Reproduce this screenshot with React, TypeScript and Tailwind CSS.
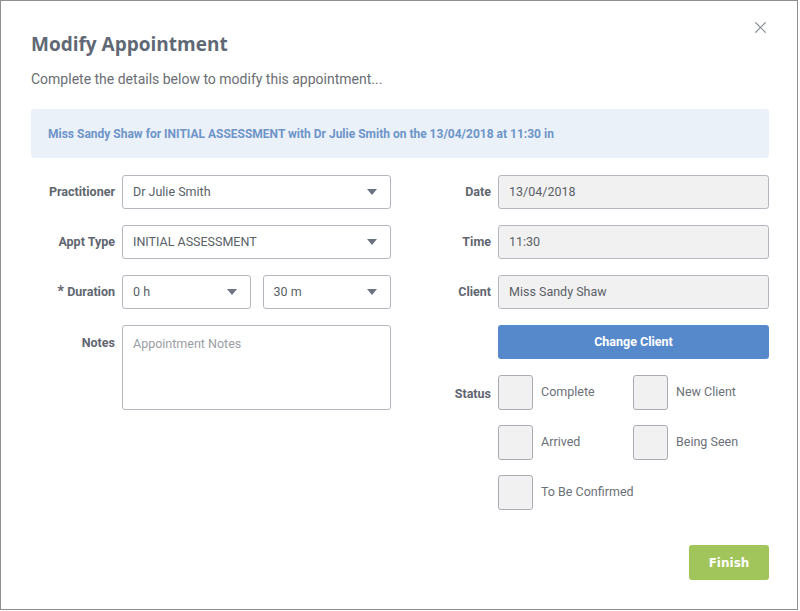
import { X } from 'lucide-react'

function Caret() {
  return (
    <svg width="10" height="6" viewBox="0 0 10 6" className="shrink-0">
      <path d="M0 0h10L5 6z" fill="#6b7280" />
    </svg>
  )
}

function Select({ value, className = '' }: { value: string; className?: string }) {
  return (
    <div
      className={
        'h-[34px] flex items-center justify-between pl-[10px] pr-[13px] border border-[#b4b8be] rounded-[3px] bg-white text-[12.5px] text-[#5a5f66] ' +
        className
      }
    >
      <span>{value}</span>
      <Caret />
    </div>
  )
}

function ReadOnly({ value }: { value: string }) {
  return (
    <div className="h-[34px] flex items-center px-[10px] border border-[#b4b8be] rounded-[3px] bg-[#f1f1f2] text-[12.5px] text-[#5a5f66] flex-1">
      {value}
    </div>
  )
}

function Label({ children, width }: { children: React.ReactNode; width: string }) {
  return (
    <div className={'shrink-0 text-right font-bold text-[12.5px] text-[#5f6670] ' + width}>
      {children}
    </div>
  )
}

function Check({ label, className = '' }: { label: string; className?: string }) {
  return (
    <div className={'flex items-center gap-[8px] ' + className}>
      <div className="w-[35px] h-[35px] border border-[#a9adb3] rounded-[3px] bg-[#f1f1f2] shrink-0" />
      <span className="text-[12.5px] text-[#6b7078] whitespace-nowrap">{label}</span>
    </div>
  )
}

export default function App() {
  return (
    <div
      className="w-[798px] h-[610px] border border-[#8f8f8f] bg-white relative"
      style={{ fontFamily: 'Roboto, "Liberation Sans", sans-serif' }}
    >
      <button className="absolute right-[27px] top-[17px] text-[#8a9099]">
        <X size={19} strokeWidth={1.5} />
      </button>

      <div className="pl-[30px] pr-[28px] pt-[30px]">
        <h1
          className="text-[19px] font-bold text-[#5f6875] leading-[26px]"
          style={{ fontFamily: '"Open Sans", Roboto, sans-serif' }}
        >
          Modify Appointment
        </h1>
        <p className="mt-[12px] text-[14px] text-[#6a6e73] leading-[20px]">
          Complete the details below to modify this appointment...
        </p>

        <div className="mt-[20px] h-[49px] bg-[#eaf1f9] rounded-[3px] flex items-center px-[17px]">
          <span className="text-[12px] font-bold text-[#6e94c8]">
            Miss Sandy Shaw for INITIAL ASSESSMENT with Dr Julie Smith on the 13/04/2018 at 11:30 in
          </span>
        </div>

        <div className="mt-[17px] flex gap-[30px]">
          {/* left column */}
          <div className="w-[360px] flex flex-col gap-[16px]">
            <div className="flex items-center gap-[7px]">
              <Label width="w-[84px]">Practitioner</Label>
              <Select value="Dr Julie Smith" className="flex-1" />
            </div>
            <div className="flex items-center gap-[7px]">
              <Label width="w-[84px]">Appt Type</Label>
              <Select value="INITIAL ASSESSMENT" className="flex-1" />
            </div>
            <div className="flex items-center gap-[7px]">
              <Label width="w-[84px]">
                <span className="text-[15px] leading-none">*</span> Duration
              </Label>
              <div className="flex-1 flex gap-[12px]">
                <Select value="0 h" className="flex-1" />
                <Select value="30 m" className="flex-1" />
              </div>
            </div>
            <div className="flex items-start gap-[7px]">
              <Label width="w-[84px] pt-[9px]">Notes</Label>
              <div className="flex-1 h-[85px] border border-[#b4b8be] rounded-[3px] px-[10px] pt-[9px] text-[12.5px] text-[#9a9ea4]">
                Appointment Notes
              </div>
            </div>
          </div>

          {/* right column */}
          <div className="flex-1 flex flex-col gap-[16px]">
            <div className="flex items-center gap-[7px]">
              <Label width="w-[70px]">Date</Label>
              <ReadOnly value="13/04/2018" />
            </div>
            <div className="flex items-center gap-[7px]">
              <Label width="w-[70px]">Time</Label>
              <ReadOnly value="11:30" />
            </div>
            <div className="flex items-center gap-[7px]">
              <Label width="w-[70px]">Client</Label>
              <ReadOnly value="Miss Sandy Shaw" />
            </div>
            <div className="flex items-center gap-[7px]">
              <div className="w-[70px] shrink-0" />
              <button className="flex-1 h-[34px] rounded-[3px] bg-[#5689cc] text-white font-bold text-[12.5px]">
                Change Client
              </button>
            </div>
            <div className="flex items-start gap-[7px]">
              <Label width="w-[70px] pt-[10px]">Status</Label>
              <div className="grid grid-cols-[135px_1fr] gap-y-[15px]">
                <Check label="Complete" />
                <Check label="New Client" />
                <Check label="Arrived" />
                <Check label="Being Seen" />
                <Check label="To Be Confirmed" />
              </div>
            </div>
          </div>
        </div>

        <div className="mt-[35px] flex justify-end">
          <button
            className="w-[80px] h-[35px] rounded-[3px] bg-[#a2c55b] text-white font-bold text-[12px]"
            style={{ fontFamily: '"DejaVu Sans", Verdana, sans-serif' }}
          >
            Finish
          </button>
        </div>
      </div>
    </div>
  )
}
